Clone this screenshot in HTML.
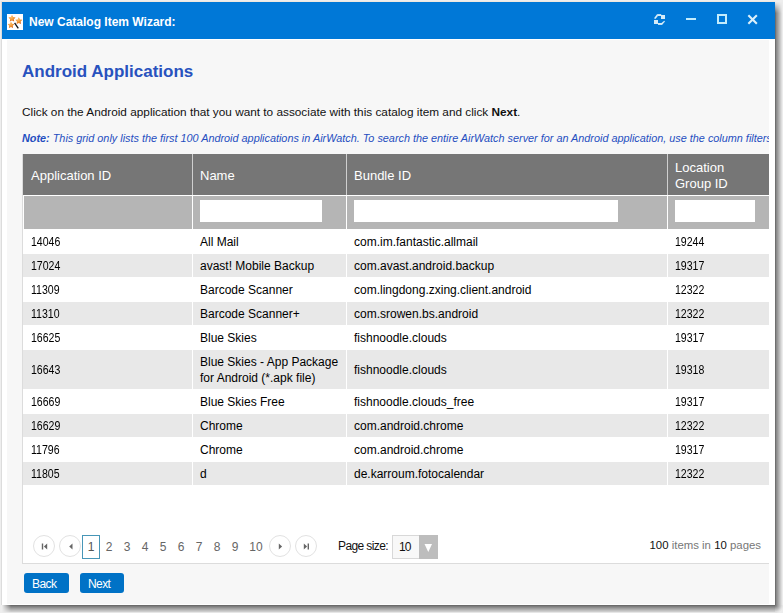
<!DOCTYPE html>
<html><head><meta charset="utf-8">
<style>
*{box-sizing:border-box;margin:0;padding:0}
html,body{width:783px;height:613px;overflow:hidden;background:#eeeeee;font-family:"Liberation Sans",sans-serif}
#win{position:absolute;left:1px;top:1px;width:774px;height:604px;border-left:1px solid #dcdcdc;border-top:1px solid #efe8e0;background:#fff}
.shr{position:absolute;left:775px;top:2px;width:8px;height:603px;background:linear-gradient(to right,rgb(110,110,110) 0.5px,rgb(138,138,138) 1.5px,rgb(153,153,153) 2.5px,rgb(170,170,170) 3.5px,rgb(187,187,187) 4.5px,rgb(204,204,204) 5.5px,rgb(221,221,221) 6.5px,rgb(236,236,236) 7.5px);-webkit-mask-image:linear-gradient(to bottom,transparent 0,#000 11px)}
.shb{position:absolute;left:2px;top:605px;width:773px;height:8px;background:linear-gradient(to bottom,rgb(107,107,107) 0.5px,rgb(127,127,127) 1.5px,rgb(143,143,143) 2.5px,rgb(160,160,160) 3.5px,rgb(175,175,175) 4.5px,rgb(191,191,191) 5.5px,rgb(205,205,205) 6.5px,rgb(230,230,230) 7.5px);-webkit-mask-image:linear-gradient(to right,transparent 0,#000 9px)}
.shc{position:absolute;left:775px;top:605px;width:8px;height:8px;background:radial-gradient(circle at 0 0,rgb(110,110,110) 0,rgb(170,170,170) 3.5px,rgb(225,225,225) 7px,#eee 8.5px)}
#title{position:absolute;left:0;top:0;width:773px;height:37px;background:#0078d7;color:#fff}
#content{position:absolute;left:5px;top:38px;width:762px;height:564px;background:#f7f7f7;overflow:hidden}
.t{position:absolute;white-space:nowrap;line-height:16px}
#grid{position:absolute;left:15px;top:114px;width:760px;height:410px;border-left:1px solid #dcdcdc;border-bottom:1px solid #dcdcdc;background:#fff}
.hdr{position:absolute;left:0;top:0;height:41px;width:760px;background:#767676;color:#fff;font-size:13px}
.hdr div{position:absolute;white-space:nowrap;line-height:16px}
.flt{position:absolute;left:0;top:42px;height:33px;width:760px;background:#b5b5b5}
.flt i{position:absolute;top:4px;height:22px;background:#fff}
.vl{position:absolute;width:1px;top:0;height:41px;background:#cfcfcf}
.vw{position:absolute;width:1px;top:42px;height:289px;background:#fff}
.row{position:absolute;left:0;width:760px;height:24px;font-size:12px;color:#000}
.alt{background:linear-gradient(#fff 0 1px,#e8e8e8 1px)}
.cell{position:absolute;top:1px;white-space:nowrap}
.num{transform:scaleX(.88);transform-origin:0 0}
.btn{position:absolute;top:533px;height:20px;background:#0072c6;border-radius:3px;color:#fff;font-size:12px;letter-spacing:-0.6px;line-height:23px;padding-left:8px}
.circ{position:absolute;top:495px;width:22px;height:22px;border:1px solid #e2e2e2;border-radius:50%;background:#fff}
.pg{position:absolute;top:495px;width:18px;height:24px;line-height:24px;text-align:center;font-size:12px;color:#666}
.pbox{position:absolute;top:495px;left:75px;width:18px;height:24px;line-height:22px;text-align:center;font-size:12px;color:#555;border:1px solid #4796b7;background:#fff}
.dd{position:absolute;left:385px;top:495px;width:46px;height:24px;border:1px solid #d8d8d8;background:#f8f8f8}
.ddl{position:absolute;left:0;top:0;width:26px;height:22px;line-height:22px;padding-left:6px;font-size:12px;letter-spacing:-1px;color:#111}
.ddr{position:absolute;left:26px;top:-1px;width:19px;height:24px;background:#bdbdbd}
</style></head><body>
<div class="shr"></div><div class="shb"></div><div class="shc"></div>
<div id="win">
  <div id="title">
    <svg style="position:absolute;left:5px;top:12px" width="16" height="16"><defs><radialGradient id="sg" cx="0.4" cy="0.35" r="0.7"><stop offset="0" stop-color="#fbc070"/><stop offset="0.6" stop-color="#f0902c"/><stop offset="1" stop-color="#d0561a"/></radialGradient></defs><rect width="16" height="16" fill="#fff"/>
<polygon points="5.00,0.90 6.18,2.98 8.52,3.46 6.90,5.22 7.17,7.59 5.00,6.60 2.83,7.59 3.10,5.22 1.48,3.46 3.82,2.98" fill="url(#sg)"/><polygon points="11.80,3.30 12.98,5.38 15.32,5.86 13.70,7.62 13.97,9.99 11.80,9.00 9.63,9.99 9.90,7.62 8.28,5.86 10.62,5.38" fill="url(#sg)"/><polygon points="4.00,7.70 5.12,9.66 7.33,10.12 5.81,11.79 6.06,14.03 4.00,13.10 1.94,14.03 2.19,11.79 0.67,10.12 2.88,9.66" fill="url(#sg)"/>
<line x1="7.6" y1="8.8" x2="11.3" y2="14.4" stroke="#111" stroke-width="1.3"/></svg>
    <div class="t" style="left:27px;top:12px;font-size:12px;font-weight:bold">New Catalog Item Wizard:</div>
    <svg style="position:absolute;left:650px;top:10px" width="16" height="16" fill="#d4ebf8"><path d="M2 6.2 L5.2 2.1 L5.9 3.9 L3.4 7Z"/><rect x="5.2" y="2.1" width="4" height="1.9"/><rect x="9" y="3" width="4" height="4"/><rect x="2" y="8" width="4" height="4"/><rect x="6" y="11" width="4" height="1.9"/><path d="M9.5 11 L12.2 8.8 L13 9.6 L10 12.9Z"/></svg>
    <div style="position:absolute;left:684px;top:16px;width:10px;height:2px;background:#c3ecfc"></div>
    <div style="position:absolute;left:715px;top:12px;width:10px;height:10px;border:2px solid #c3ecfc"></div>
    <svg style="position:absolute;left:745px;top:12px" width="12" height="12"><path d="M2.1 2.1 L9.1 9.1 M9.1 2.1 L2.1 9.1" stroke="#dcf0fa" stroke-width="2.1" stroke-linecap="square"/><rect x="4.1" y="4.1" width="3" height="3" fill="#dcf0fa"/></svg>
  </div>
  <div id="content">
    <div class="t" style="left:15px;top:22px;font-size:17px;line-height:20px;font-weight:bold;color:#2852be">Android Applications</div>
    <div class="t" style="left:15px;top:64px;font-size:11.8px;color:#111">Click on the Android application that you want to associate with this catalog item and click <b>Next</b>.</div>
    <div class="t" style="left:15px;top:90px;font-size:10.85px;font-style:italic;color:#254ec0"><b>Note:</b> This grid only lists the first 100 Android applications in AirWatch. To search the entire AirWatch server for an Android application, use the column filters to find what you need.</div>
    <div id="grid">
      <div class="hdr">
        <div style="left:8px;top:14px">Application ID</div>
        <div style="left:177px;top:14px">Name</div>
        <div style="left:331px;top:14px">Bundle ID</div>
        <div style="left:652px;top:6px">Location<br>Group ID</div>
      </div>
      <div class="flt"><i style="left:177px;width:122px"></i><i style="left:331px;width:264px"></i><i style="left:652px;width:80px"></i></div>
<div class="row" style="top:75px;height:24px">
<div class="cell num" style="left:8px;line-height:24px">14046</div>
<div class="cell" style="left:177px;line-height:24px">All Mail</div>
<div class="cell" style="left:331px;line-height:24px">com.im.fantastic.allmail</div>
<div class="cell num" style="left:652px;line-height:24px">19244</div>
</div>
<div class="row alt" style="top:99px;height:24px">
<div class="cell num" style="left:8px;line-height:24px">17024</div>
<div class="cell" style="left:177px;line-height:24px">avast! Mobile Backup</div>
<div class="cell" style="left:331px;line-height:24px">com.avast.android.backup</div>
<div class="cell num" style="left:652px;line-height:24px">19317</div>
</div>
<div class="row" style="top:123px;height:24px">
<div class="cell num" style="left:8px;line-height:24px">11309</div>
<div class="cell" style="left:177px;line-height:24px">Barcode Scanner</div>
<div class="cell" style="left:331px;line-height:24px">com.lingdong.zxing.client.android</div>
<div class="cell num" style="left:652px;line-height:24px">12322</div>
</div>
<div class="row alt" style="top:147px;height:24px">
<div class="cell num" style="left:8px;line-height:24px">11310</div>
<div class="cell" style="left:177px;line-height:24px">Barcode Scanner+</div>
<div class="cell" style="left:331px;line-height:24px">com.srowen.bs.android</div>
<div class="cell num" style="left:652px;line-height:24px">12322</div>
</div>
<div class="row" style="top:171px;height:24px">
<div class="cell num" style="left:8px;line-height:24px">16625</div>
<div class="cell" style="left:177px;line-height:24px">Blue Skies</div>
<div class="cell" style="left:331px;line-height:24px">fishnoodle.clouds</div>
<div class="cell num" style="left:652px;line-height:24px">19317</div>
</div>
<div class="row alt" style="top:195px;height:40px">
<div class="cell num" style="left:8px;line-height:40px">16643</div>
<div class="cell" style="left:177px;top:5px;line-height:16px">Blue Skies - App Package<br>for Android (*.apk file)</div>
<div class="cell" style="left:331px;line-height:40px">fishnoodle.clouds</div>
<div class="cell num" style="left:652px;line-height:40px">19318</div>
</div>
<div class="row" style="top:235px;height:24px">
<div class="cell num" style="left:8px;line-height:24px">16669</div>
<div class="cell" style="left:177px;line-height:24px">Blue Skies Free</div>
<div class="cell" style="left:331px;line-height:24px">fishnoodle.clouds_free</div>
<div class="cell num" style="left:652px;line-height:24px">19317</div>
</div>
<div class="row alt" style="top:259px;height:24px">
<div class="cell num" style="left:8px;line-height:24px">16629</div>
<div class="cell" style="left:177px;line-height:24px">Chrome</div>
<div class="cell" style="left:331px;line-height:24px">com.android.chrome</div>
<div class="cell num" style="left:652px;line-height:24px">12322</div>
</div>
<div class="row" style="top:283px;height:24px">
<div class="cell num" style="left:8px;line-height:24px">11796</div>
<div class="cell" style="left:177px;line-height:24px">Chrome</div>
<div class="cell" style="left:331px;line-height:24px">com.android.chrome</div>
<div class="cell num" style="left:652px;line-height:24px">19317</div>
</div>
<div class="row alt" style="top:307px;height:24px">
<div class="cell num" style="left:8px;line-height:24px">11805</div>
<div class="cell" style="left:177px;line-height:24px">d</div>
<div class="cell" style="left:331px;line-height:24px">de.karroum.fotocalendar</div>
<div class="cell num" style="left:652px;line-height:24px">12322</div>
</div>

      <div class="vl" style="left:169px"></div><div class="vl" style="left:323px"></div><div class="vl" style="left:644px"></div>
      <div class="vw" style="left:0;height:33px"></div>
      <div class="vw" style="left:169px"></div><div class="vw" style="left:323px"></div><div class="vw" style="left:644px"></div>
    </div>
    <div class="circ" style="left:26px"><svg width="20" height="20" style="position:absolute;left:0;top:0"><rect x="7.8" y="7.5" width="1.4" height="6" fill="#666"/><path d="M13.2 7.5 L13.2 13.5 L9.9 10.5Z" fill="#666"/></svg></div>
    <div class="circ" style="left:52px"><svg width="20" height="20" style="position:absolute;left:0;top:0"><path d="M12.5 7.5 L12.5 13.5 L9.2 10.5Z" fill="#666"/></svg></div>
    <div class="pbox" style="left:75px">1</div>
    <div class="pg" style="left:93px">2</div><div class="pg" style="left:111px">3</div><div class="pg" style="left:129px">4</div><div class="pg" style="left:147px">5</div><div class="pg" style="left:165px">6</div><div class="pg" style="left:183px">7</div><div class="pg" style="left:201px">8</div><div class="pg" style="left:219px">9</div><div class="pg" style="left:237px;width:24px">10</div>
    <div class="circ" style="left:262px"><svg width="20" height="20" style="position:absolute;left:0;top:0"><path d="M8.8 7.5 L8.8 13.5 L12.1 10.5Z" fill="#666"/></svg></div>
    <div class="circ" style="left:288px"><svg width="20" height="20" style="position:absolute;left:0;top:0"><path d="M7.8 7.5 L7.8 13.5 L11.1 10.5Z" fill="#666"/><rect x="11.6" y="7.5" width="1.4" height="6" fill="#666"/></svg></div>
    <div class="t" style="left:331px;top:498px;font-size:12px;letter-spacing:-0.6px;color:#111">Page size:</div>
    <div class="dd"><div class="ddl">10</div><div class="ddr"><svg width="19" height="22"><path d="M5.5 9 L13 9 L9.25 17Z" fill="#fff"/></svg></div></div>
    <div class="t" style="right:8px;top:497px;font-size:11.4px;color:#777"><span style="color:#111">100</span> items in <span style="color:#111">10</span> pages</div>
    <div class="btn" style="left:17px;width:45px">Back</div>
    <div class="btn" style="left:73px;width:44px">Next</div>
  </div>
</div>
</body></html>
